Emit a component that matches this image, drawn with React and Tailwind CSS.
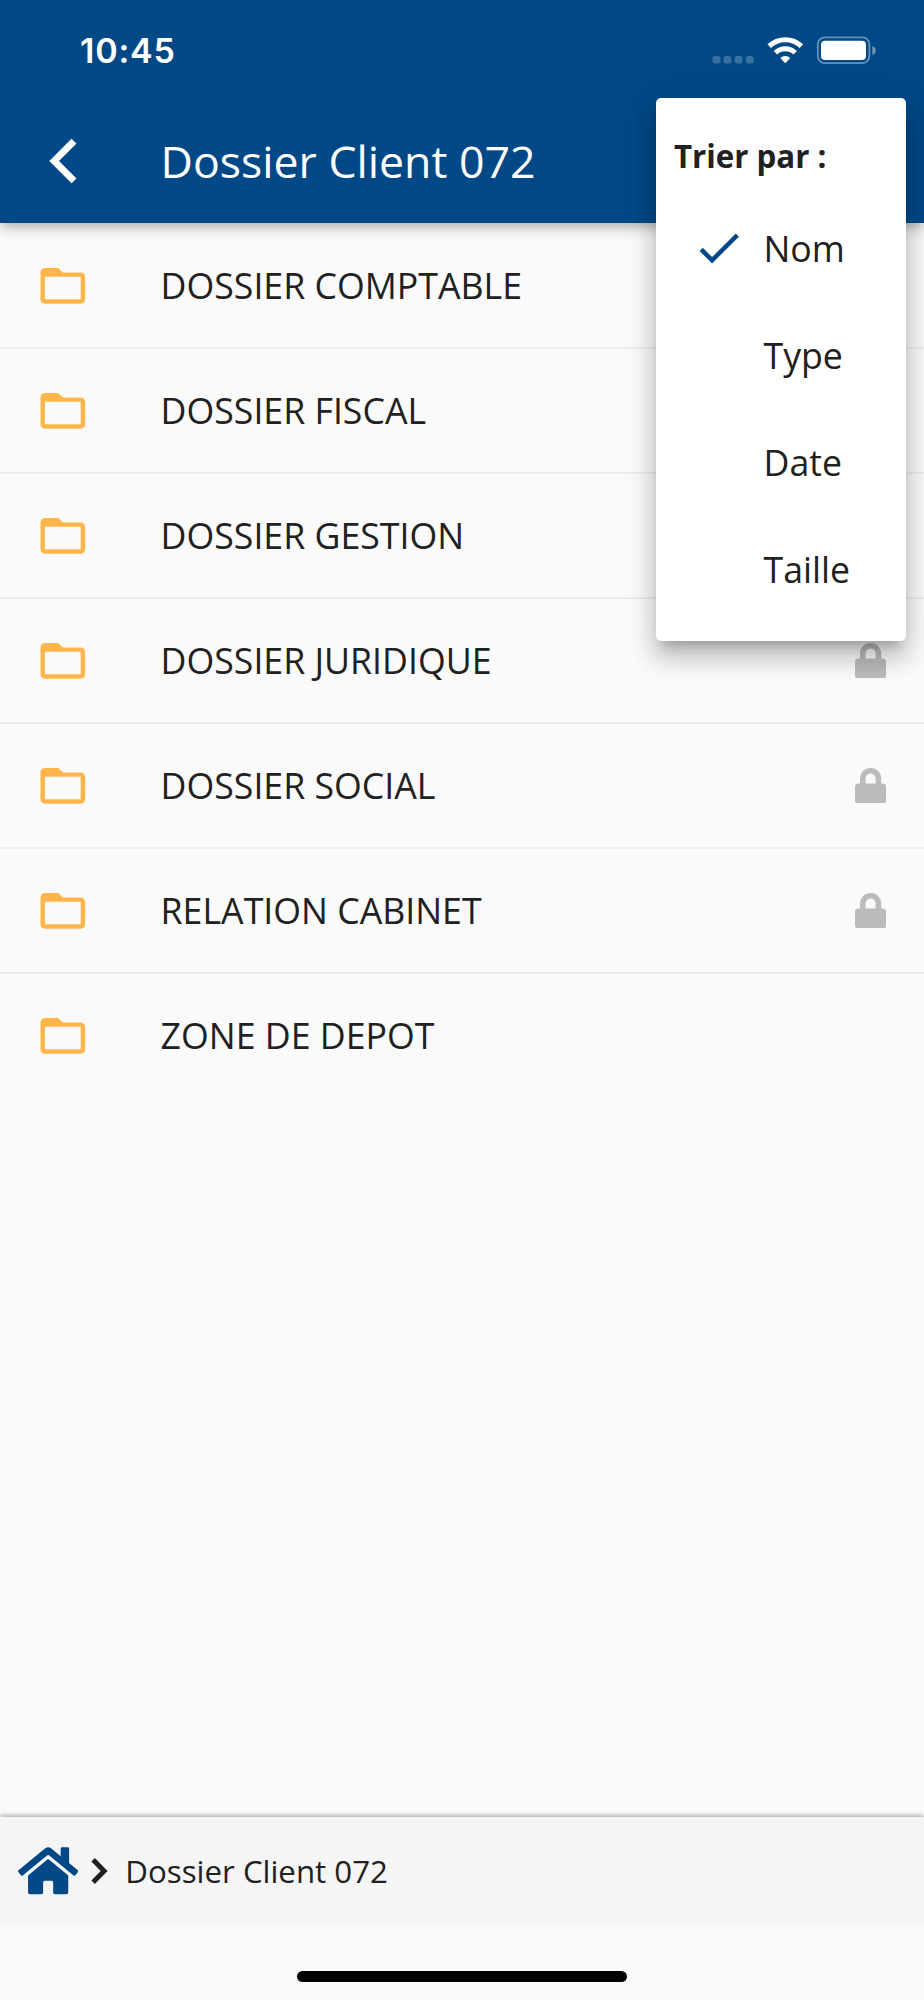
import { FaHome, FaLock } from 'react-icons/fa';
import { MdCheck, MdFolderOpen } from 'react-icons/md';

const folders = [
  { name: 'DOSSIER COMPTABLE', locked: false },
  { name: 'DOSSIER FISCAL', locked: false },
  { name: 'DOSSIER GESTION', locked: false },
  { name: 'DOSSIER JURIDIQUE', locked: true },
  { name: 'DOSSIER SOCIAL', locked: true },
  { name: 'RELATION CABINET', locked: true },
  { name: 'ZONE DE DEPOT', locked: false },
];

const sortOptions = ['Nom', 'Type', 'Date', 'Taille'];

function StatusBar() {
  return (
    <div className="flex h-[98px] items-start justify-between pl-[80px] pr-[48px] pt-[34px] text-white">
      <span className="font-['Inter',sans-serif] text-[34px] font-semibold leading-[34px] tracking-[0.8px]">10:45</span>
      <svg width="164" height="28" viewBox="712 36 164 28" className="mt-[2px]">
        <g fill="#fff" fillOpacity="0.22">
          <rect x="712.5" y="56" width="8" height="7.5" rx="2.5" />
          <rect x="723.5" y="56" width="8" height="7.5" rx="2.5" />
          <rect x="734.5" y="56" width="8" height="7.5" rx="2.5" />
          <rect x="745.8" y="56" width="8" height="7.5" rx="2.5" />
        </g>
        <g fill="none" stroke="#fff">
          <path d="M769.2 46.2a23.3 23.3 0 0 1 32.2 0" strokeWidth="5.2" />
          <path d="M775.4 52.8a14.2 14.2 0 0 1 19.8 0" strokeWidth="5" />
        </g>
        <path d="M785.3 63.2l-5-5.2a7.3 7.3 0 0 1 10 0z" fill="#fff" />
        <rect x="817.8" y="37.3" width="51.6" height="25.8" rx="7" fill="none" stroke="#fff" strokeOpacity="0.4" strokeWidth="1.8" />
        <rect x="821" y="40.8" width="45" height="19.2" rx="4" fill="#fff" />
        <path d="M872.4 46c4.4 1.6 4.4 7.4 0 9z" fill="#fff" fillOpacity="0.45" />
      </svg>
    </div>
  );
}

function FolderRow({ name, locked }) {
  return (
    <li className="flex h-[125px] items-center border-b-2 border-[#ededed] pl-[35.5px] pr-[38px] last:border-transparent">
      <MdFolderOpen className="size-[53.6px] shrink-0 text-[#ffb54a]" />
      <span className="ml-[71.5px] flex-1 pb-[2px] text-[35.7px] leading-[50px]">{name}</span>
      {locked && <FaLock className="h-[35.7px] w-[31.25px] text-[#bbbbbb]" />}
    </li>
  );
}

function SortMenu({ selected }) {
  return (
    <div className="absolute left-[656px] top-[98px] h-[543px] w-[250px] rounded-[5px] bg-white pt-[18px] shadow-[0_11px_11px_-7px_rgba(0,0,0,0.2),0_18px_22px_2px_rgba(0,0,0,0.14),0_7px_31px_4px_rgba(0,0,0,0.12)]">
      <div className="flex h-[79px] items-center pl-[18px] pt-[2px] text-[31.25px] font-bold">Trier par :</div>
      {sortOptions.map(option => (
        <div key={option} className="flex h-[107.14px] items-center pl-[36px] text-[35.7px]">
          <div className="w-[71.5px]">
            {option === selected && <MdCheck className="mb-[1px] size-[53.6px] text-[#014886]" />}
          </div>
          <span>{option}</span>
        </div>
      ))}
    </div>
  );
}

export default function App() {
  return (
    <div className="relative flex h-[2000px] w-[924px] flex-col overflow-hidden bg-[#fafafa] font-['Open_Sans',sans-serif] text-[#212121]">
      <header className="relative h-[223px] shrink-0 bg-[#014886] shadow-[0_4px_9px_-2px_rgba(0,0,0,0.2),0_9px_11px_rgba(0,0,0,0.08),0_2px_20px_rgba(0,0,0,0.08)]">
        <StatusBar />
        <div className="flex h-[125px] items-center pl-[49px] text-white">
          <svg width="28" height="46" viewBox="0 0 28 46" fill="currentColor">
            <path d="M.3 23L22.5.8l5 4.8L10 23l17.5 17.4-5 4.8z" />
          </svg>
          <h1 className="ml-[83.5px] text-[44.64px] leading-[60px]">Dossier Client 072</h1>
        </div>
      </header>

      <ul className="flex-1 pt-[1px]">
        {folders.map(folder => <FolderRow key={folder.name} {...folder} />)}
      </ul>

      <nav className="flex h-[107px] shrink-0 items-center bg-[#f5f5f5] pl-[18px] text-[31.25px] shadow-[0_-2px_4px_rgba(0,0,0,0.28)] [clip-path:inset(-12px_0_0_0)]">
        <FaHome className="h-[53.6px] w-[60.3px] text-[#014886]" />
        <svg width="17" height="26" viewBox="0 0 17 26" fill="#212121" className="ml-[12.5px]">
          <path d="M.4 3.5L3.9 0 16.6 13 3.9 26 .4 22.5 9.7 13z" />
        </svg>
        <span className="ml-[17.5px] pt-[2px]">Dossier Client 072</span>
      </nav>
      <div className="flex h-[76px] shrink-0 justify-center pt-[47px]">
        <div className="h-[11px] w-[330px] rounded-full bg-black" />
      </div>

      <SortMenu selected="Nom" />
    </div>
  );
}
